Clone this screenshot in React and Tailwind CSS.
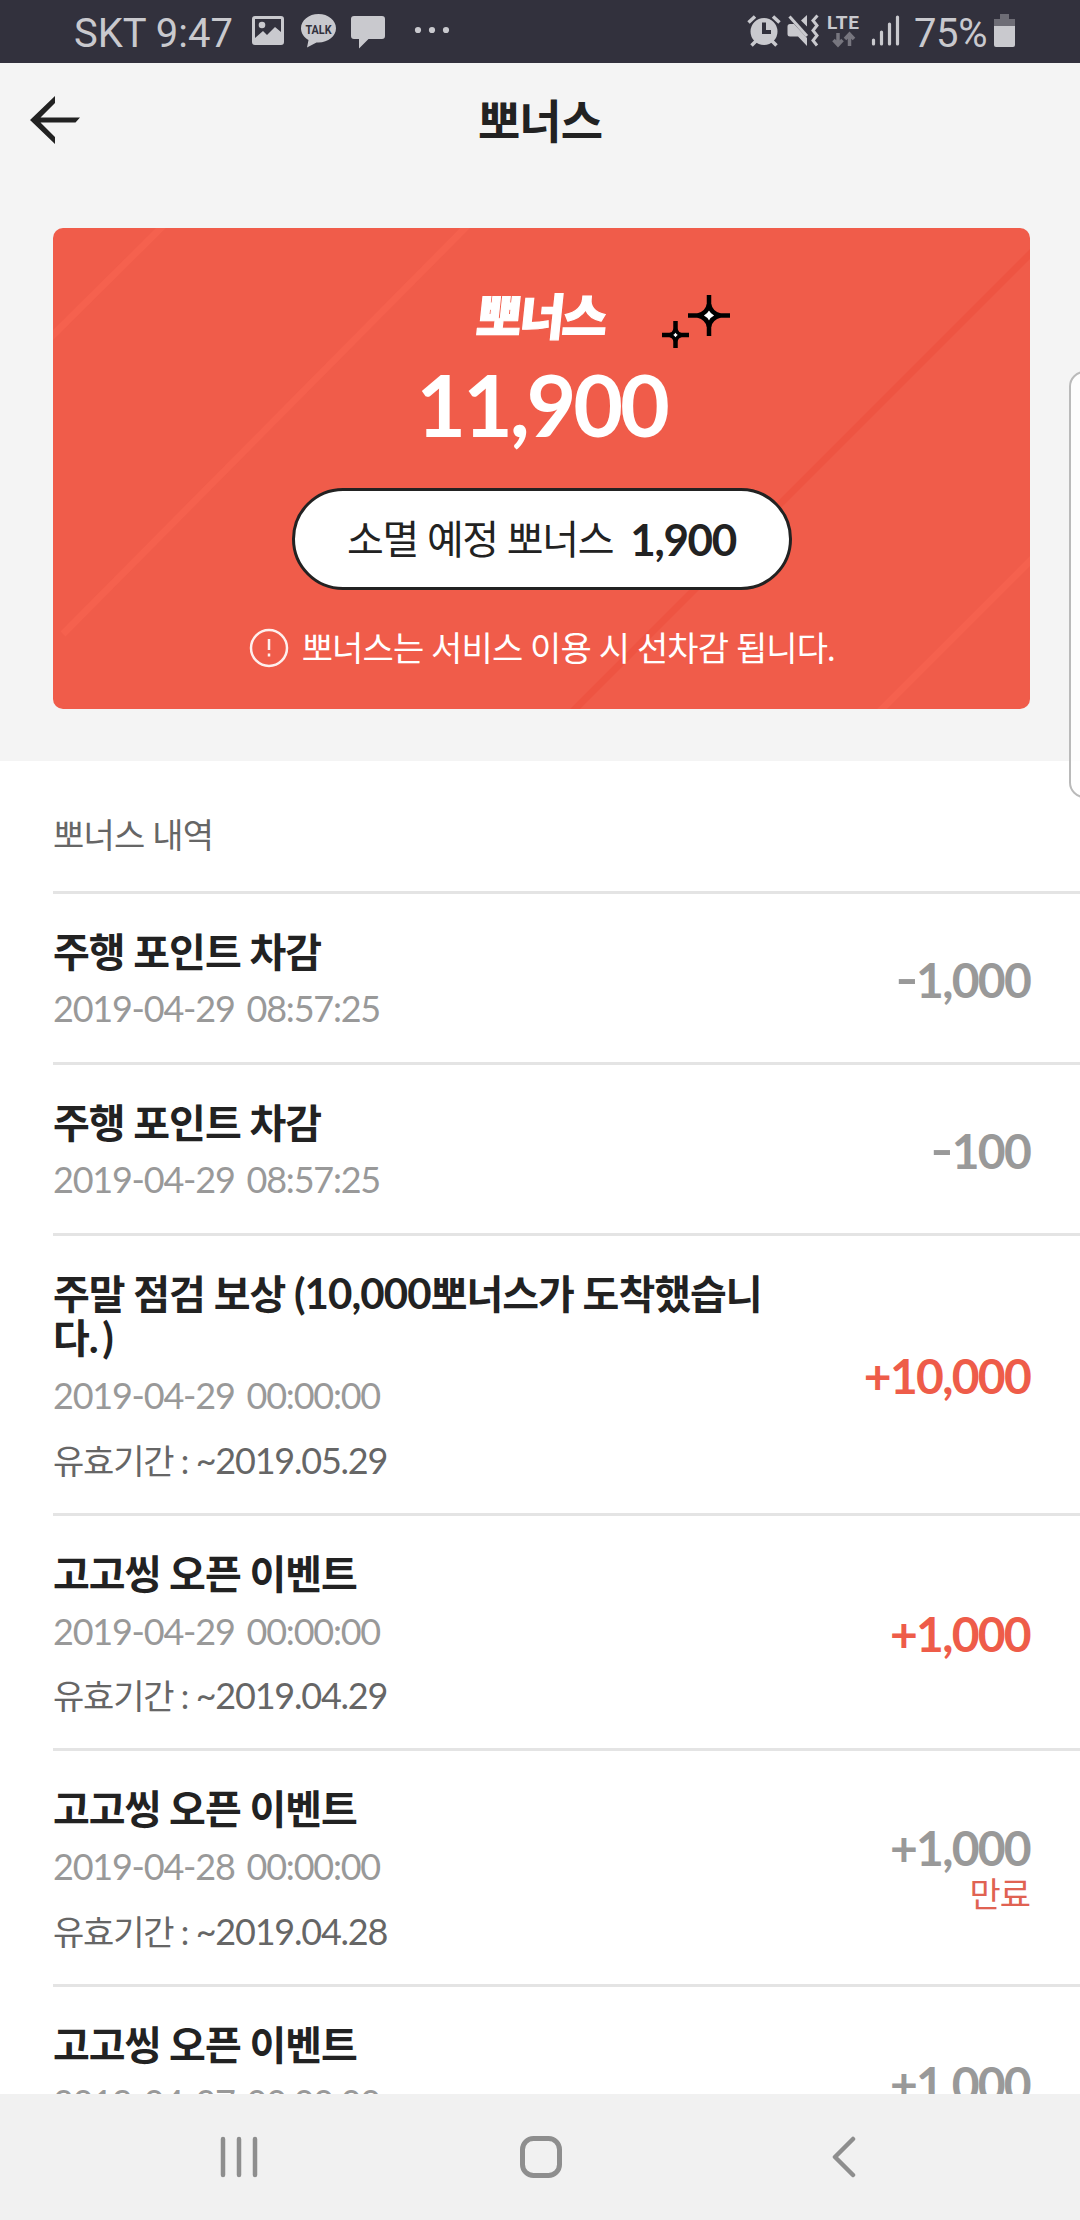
import clsx from "clsx";

const history = [
  { id: 1, title: "주행 포인트 차감", date: "2019-04-29 08:57:25", amount: "-1,000" },
  { id: 2, title: "주행 포인트 차감", date: "2019-04-29 08:57:25", amount: "-100" },
  {
    id: 3,
    title: "주말 점검 보상 (10,000뽀너스가 도착했습니다.)",
    date: "2019-04-29 00:00:00",
    until: "~2019.05.29",
    amount: "+10,000",
    active: true,
  },
  {
    id: 4,
    title: "고고씽 오픈 이벤트",
    date: "2019-04-29 00:00:00",
    until: "~2019.04.29",
    amount: "+1,000",
    active: true,
  },
  {
    id: 5,
    title: "고고씽 오픈 이벤트",
    date: "2019-04-28 00:00:00",
    until: "~2019.04.28",
    amount: "+1,000",
    expired: true,
  },
  {
    id: 6,
    title: "고고씽 오픈 이벤트",
    date: "2019-04-27 00:00:00",
    until: "~2019.04.27",
    amount: "+1,000",
    expired: true,
  },
];

const StatusBar = () => (
  <div className="flex h-[63px] shrink-0 items-center justify-between bg-[#32313d] pl-[74px] pr-[65px] font-[Roboto,sans-serif] text-[40px] leading-none text-[#c9c9ce]">
    <div className="flex items-center">
      <span className="w-[178px] whitespace-nowrap pt-1">SKT 9:47</span>
      <svg width="200" height="63" viewBox="252 0 200 63" fill="#c9c9ce">
        <path
          fillRule="evenodd"
          d="M255 16h26a3 3 0 0 1 3 3v23a3 3 0 0 1-3 3h-26a3 3 0 0 1-3-3V19a3 3 0 0 1 3-3zm0 3v19l8-7 4 4 8-8 6 5V19z"
        />
        <circle cx="262" cy="25" r="3.3" />
        <path d="M318.500 14c9.700 0 17.500 6.300 17.500 14.200s-7.800 14.200-17.500 14.200h-2L307 47.500l1.500-7.500c-4.500-2.600-7.500-6.800-7.500-11.800C301 20.300 308.800 14 318.500 14z" />
        <text x="318.500" y="33.500" textAnchor="middle" fontSize="12" fontWeight="700" fill="#32313d" textLength="26" lengthAdjust="spacingAndGlyphs">
          TALK
        </text>
        <path d="M354 16h28a3 3 0 0 1 3 3v17a3 3 0 0 1-3 3h-13.500l-9.500 9.500V39h-5a3 3 0 0 1-3-3V19a3 3 0 0 1 3-3z" />
        <circle cx="418" cy="30" r="3.100" />
        <circle cx="432" cy="30" r="3.100" />
        <circle cx="446" cy="30" r="3.100" />
      </svg>
    </div>
    <div className="flex items-center">
      <svg width="167" height="63" viewBox="747 0 167 63" fill="#c9c9ce">
        <path fillRule="evenodd" d="M764 18a13.500 13.500 0 1 1 0 27 13.500 13.500 0 0 1 0-27zm-2 4.500V34h9v-4h-5v-7.500z" />
        <path
          d="M748.500 22.500l6.500-6M779.500 22.500l-6.500-6M756 41l-4.500 4.500M772 41l4.500 4.500"
          fill="none"
          stroke="#c9c9ce"
          strokeWidth="3.500"
        />
        <path d="M790 24h4l13 14v8l-9-9.500h-8a2.500 2.500 0 0 1-2.500-2.500v-7.500A2.500 2.500 0 0 1 790 24zM801 20.500l6-5.500v11.500z" />
        <path d="M789.500 16.500L807 36" stroke="#c9c9ce" strokeWidth="3" />
        <path
          d="M817.500 15.500l-4.500 5 4 5-4 5 4 5-4 5 4 5"
          fill="none"
          stroke="#c9c9ce"
          strokeWidth="3"
        />
        <text x="827" y="28.500" fontSize="19" fontWeight="700" textLength="32">
          LTE
        </text>
        <path
          d="M838 33v11M833.500 40l4.500 5 4.500-5M849.500 46V34M845 39l4.500-5 4.500 5"
          fill="none"
          stroke="#77767f"
          strokeWidth="3.500"
        />
        <path
          d="M873.500 40v4M881.500 32v12M889.500 24v20M897.500 17v27"
          stroke="#c9c9ce"
          strokeWidth="3.200"
          strokeLinecap="round"
        />
      </svg>
      <span className="w-[80px] whitespace-nowrap pt-1 tracking-[-0.4px]">75%</span>
      <svg width="21" height="63" viewBox="994 0 21 63">
        <path d="M1000 14h9v5h6v8h-21v-8h6z" fill="#6e6d76" />
        <path d="M994 26h21v19a2 2 0 0 1-2 2h-17a2 2 0 0 1-2-2z" fill="#c9c9ce" />
      </svg>
    </div>
  </div>
);

const Header = () => (
  <header className="grid h-[115px] grid-cols-[1fr_auto_1fr] items-center px-[30px]">
    <svg className="mb-[2px]" width="50" height="48" viewBox="0 0 50 48" fill="#222">
      <path d="M25 0v7L10.500 21.500H50l-4.500 5H10.500L25 41v7L0 24z" />
    </svg>
    <h1 className="text-[46px] font-bold leading-none tracking-[-0.02em]">뽀너스</h1>
  </header>
);

const Sparkles = () => (
  <svg
    className="absolute left-[609px] top-[67px]"
    width="69"
    height="54"
    viewBox="0 0 69 54"
    stroke="#000"
    strokeWidth="4.500"
  >
    <path d="M47 0v41M26 20.500h42M13.500 26v27M0 40h27" />
    <path
      d="M47 9.500q2 9 11 11q-9 2-11 11q-2-9-11-11q9-2 11-11z"
      fill="#fff"
    />
    <path d="M13.500 34q1.500 4.500 6 6q-4.500 1.500-6 6q-1.500-4.500-6-6q4.500-1.500 6-6z" fill="#fff" strokeWidth="3.500" />
  </svg>
);

const PointCard = () => (
  <section className="relative mx-[53px] mt-[50px] flex h-[481px] w-[977px] flex-col items-center overflow-hidden rounded-[10px] bg-[#f05c4a] text-white">
    <svg className="absolute inset-0" width="977" height="481" fill="none" strokeWidth="7">
      <path d="M-5 112L113 -5M10 406L417 -5M825 485L982 328" stroke="#f5614e" />
      <path d="M518 485L982 21" stroke="#ee5442" />
    </svg>
    <div className="relative mt-[63px] -skew-x-6 text-[49px] font-black leading-[50px] tracking-[-0.045em] [-webkit-text-stroke:1.2px_white]">
      뽀너스
    </div>
    <Sparkles />
    <div className="relative mt-[13px] text-[86px] font-bold leading-[100px] tracking-[-0.037em]">
      11,900
    </div>
    <div className="relative mt-[34px] flex h-[102px] w-[500px] items-center justify-center gap-[17px] rounded-full border-3 border-[#222] bg-white text-[#222]">
      <span className="text-[40px] tracking-[-0.033em]">소멸 예정 뽀너스</span>
      <span className="text-[44px] font-bold tracking-[-0.03em]">1,900</span>
    </div>
    <div className="relative mt-[37px] flex items-center gap-[13px] text-[34px] leading-[42px] tracking-[-0.026em]">
      <svg width="40" height="40" viewBox="0 0 40 40" fill="none" stroke="#fff" strokeOpacity="0.9" strokeWidth="2.500">
        <circle cx="20" cy="20" r="18" />
        <path d="M20 11v11M20 25.500v3" />
      </svg>
      뽀너스는 서비스 이용 시 선차감 됩니다.
    </div>
  </section>
);

// latin runs are set a little larger than hangul
const Title = ({ text }) => (
  <p className="w-[730px] break-all text-[40px] font-bold leading-[44px] tracking-[-0.025em] text-[#222]">
    {text.split(/([(\d,.)]+)/).map((part, i) =>
      i % 2 ? (
        <span
          key={i}
          className={clsx("text-[42px] leading-none", part === ".)" ? "tracking-[0.08em]" : "tracking-[-0.022em]")}
        >
          {part}
        </span>
      ) : (
        part
      )
    )}
  </p>
);

const Amount = ({ value, active }) => (
  <span
    className={clsx(
      "text-[48px] font-bold leading-[50px] tracking-[-0.036em]",
      active ? "text-[#ee5c49]" : "text-[#999]"
    )}
  >
    {value[0] === "-" ? (
      <>
        <span className="inline-block origin-right -translate-y-[2px] scale-x-130">-</span>
        {value.slice(1)}
      </>
    ) : (
      value
    )}
  </span>
);

const HistoryRow = ({ item }) => (
  <li className="ml-[53px] flex items-center justify-between border-b-3 border-[#e4e4e4] pb-[31px] pr-[50px] pt-[36px]">
    <div>
      <Title text={item.title} />
      <p
        className={clsx(
          "pb-px text-[36px] leading-[43px] tracking-[-0.034em] text-[#999] [word-spacing:4px]",
          item.until ? "mt-[14px]" : "mt-[13px]"
        )}
      >
        {item.date}
      </p>
      {item.until && (
        <p className="mt-[20.5px] h-[43px] text-[36px] leading-[43px] tracking-[-0.034em] text-[#666]">
          <span className="text-[34px] leading-none tracking-[-0.035em]">유효기간 : </span>
          {item.until}
        </p>
      )}
    </div>
    <div className="flex flex-col items-end pb-px">
      <Amount value={item.amount} active={item.active} />
      {item.expired && (
        <span className="text-[34px] leading-[42px] tracking-[-0.03em] text-[#e06252]">만료</span>
      )}
    </div>
  </li>
);

const NavBar = () => (
  <nav className="flex h-[126px] shrink-0 items-center bg-[#f1f1f1] pl-[220px]">
    <svg width="38" height="42" viewBox="0 0 38 42" stroke="#8e8e8e" strokeWidth="4.500" strokeLinecap="round">
      <path d="M3 3v36M19 3v36M35 3v36" />
    </svg>
    <svg
      className="ml-[262px]"
      width="42"
      height="42"
      viewBox="0 0 42 42"
      fill="none"
      stroke="#8e8e8e"
      strokeWidth="5"
    >
      <rect x="2.500" y="2.500" width="37" height="37" rx="11" />
    </svg>
    <svg
      className="ml-[270px]"
      width="24"
      height="42"
      viewBox="0 0 24 42"
      fill="none"
      stroke="#8e8e8e"
      strokeWidth="4.500"
      strokeLinecap="round"
      strokeLinejoin="round"
    >
      <path d="M21 3L3 21l18 18" />
    </svg>
  </nav>
);

export default function App() {
  return (
    <div className="relative flex h-[2220px] w-[1080px] flex-col overflow-hidden bg-white font-[Lato,'Noto_Sans_CJK_KR',sans-serif] text-[#222]">
      <StatusBar />
      <div className="h-[698px] shrink-0 bg-[#f4f4f4]">
        <Header />
        <PointCard />
      </div>
      <main className="min-h-0 flex-1 overflow-hidden">
        <h2 className="ml-[53px] h-[133px] border-b-3 border-[#e4e4e4] pt-[52px] text-[34px] leading-[44px] tracking-[-0.024em] text-[#666]">
          뽀너스 내역
        </h2>
        <ul>
          {history.map((item) => (
            <HistoryRow key={item.id} item={item} />
          ))}
        </ul>
      </main>
      <NavBar />
      <div className="absolute -right-5 top-[371px] h-[427px] w-[31px] rounded-2xl border-2 border-[#bababa] bg-white/80" />
    </div>
  );
}
